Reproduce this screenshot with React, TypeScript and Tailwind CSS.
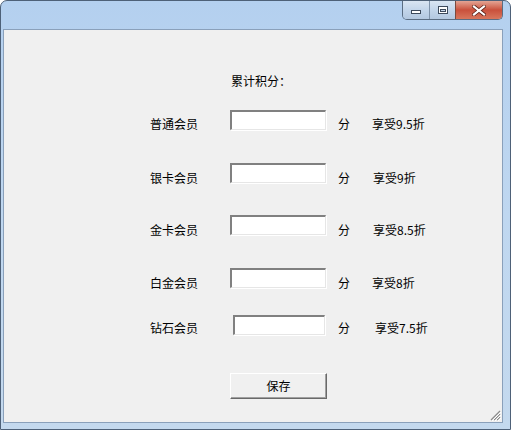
import React from "react";

const font = { fontFamily: '"Noto Sans CJK SC", "Noto Sans", sans-serif' };

function Field({ ml, w }: { ml: number; w: number }) {
  return (
    <div
      className="h-[20px] bg-white border-t-2 border-l-2 border-b border-r border-t-[#808080] border-l-[#808080] border-b-[#e6e6e6] border-r-[#e6e6e6] shadow-[1px_1px_0_#ffffff]"
      style={{ marginLeft: ml, width: w }}
    />
  );
}

function Row({
  label,
  offer,
  mt,
  fieldMl = 0,
  fieldW = 96,
  fenMl = 12,
  offerMl = 22,
  textMt = 6,
}: {
  label: string;
  offer: string;
  mt: number;
  fieldMl?: number;
  fieldW?: number;
  fenMl?: number;
  offerMl?: number;
  textMt?: number;
}) {
  return (
    <div className="flex h-[20px] items-start pl-[146px]" style={{ marginTop: mt }}>
      <div className="w-[80px] text-[12px] leading-[16px] text-black" style={{ marginTop: textMt }}>
        {label}
      </div>
      <Field ml={fieldMl} w={fieldW} />
      <div className="text-[12px] leading-[16px] text-black" style={{ marginTop: textMt, marginLeft: fenMl }}>
        分
      </div>
      <div className="text-[12px] leading-[16px] text-black" style={{ marginTop: textMt, marginLeft: offerMl }}>
        {offer}
      </div>
    </div>
  );
}

export default function App() {
  return (
    <div className="w-[511px] h-[430px] overflow-hidden bg-white" style={font}>
      <div className="w-[511px] h-[430px] rounded-t-[7px] border border-[#4e6178] bg-gradient-to-b from-[#b4d0ef] via-[#bfd7f0] to-[#c4d9ee] flex flex-col">
        {/* title bar */}
        <div className="h-[28px] flex justify-end items-start pr-[7px] shrink-0">
          <div className="flex h-[19px] border border-t-0 border-[#5b6d82] rounded-b-[5px] overflow-hidden">
            <div className="w-[27px] h-full bg-gradient-to-b from-[#d9e5f2] via-[#c3d5ea] to-[#b3c8e0] flex items-center justify-center border-r border-[#7f93aa]">
              <div className="w-[10px] h-[4px] mt-[4px] bg-white border border-[#3d4a5c]" />
            </div>
            <div className="w-[26px] h-full bg-gradient-to-b from-[#d9e5f2] via-[#c3d5ea] to-[#b3c8e0] flex items-center justify-center border-r border-[#7a4a3e]">
              <div className="w-[10px] h-[8px] bg-white border border-[#3d4a5c] flex items-center justify-center">
                <div className="w-[6px] h-[3px] border border-[#3d4a5c] bg-[#c6d6ea]" />
              </div>
            </div>
            <div className="w-[46px] h-full bg-gradient-to-b from-[#e3a494] via-[#c9503c] to-[#d8765c] flex items-center justify-center">
              <svg width="14" height="11" viewBox="0 0 14 11">
                <path d="M2 1.5 L12 9.5 M12 1.5 L2 9.5" stroke="#5a2218" strokeWidth="3.6" strokeLinecap="square" />
                <path d="M2 1.5 L12 9.5 M12 1.5 L2 9.5" stroke="#ffffff" strokeWidth="2.2" strokeLinecap="square" />
              </svg>
            </div>
          </div>
        </div>
        {/* client */}
        <div className="ml-[2px] mr-[7px] mb-[6px] flex-1 border border-[#8aa0ba] bg-[#f0f0f0] flex flex-col relative">
          <div className="pt-[43px] pl-[227px] text-[12px] leading-[16px] text-black">累计积分：</div>
          <Row label="普通会员" offer="享受9.5折" mt={21} textMt={6} />
          <Row label="银卡会员" offer="享受9折" mt={33} textMt={7} offerMl={23} />
          <Row label="金卡会员" offer="享受8.5折" mt={32} textMt={7} offerMl={23} />
          <Row label="白金会员" offer="享受8折" mt={33} textMt={7} offerMl={22} />
          <Row label="钻石会员" offer="享受7.5折" mt={27} textMt={5} fieldMl={3} fieldW={92} fenMl={13} offerMl={25} />
          <div className="pl-[226px] mt-[38px]">
            <div className="w-[97px] h-[26px] bg-[#f0f0f0] border-t border-l border-white border-b border-r border-b-[#696969] border-r-[#696969] shadow-[inset_-1px_-1px_0_#a0a0a0] flex items-center justify-center text-[12px] leading-[16px] text-black">
              保存
            </div>
          </div>
          <svg className="absolute right-[1px] bottom-[1px]" width="12" height="12" viewBox="0 0 12 12">
            <path d="M11 2 L2 11 M11 5 L5 11 M11 8 L8 11" stroke="#8a8a8a" strokeWidth="1.2" />
            <path d="M12 3 L3 12 M12 6 L6 12 M12 9 L9 12" stroke="#ffffff" strokeWidth="1" />
          </svg>
        </div>
      </div>
    </div>
  );
}
